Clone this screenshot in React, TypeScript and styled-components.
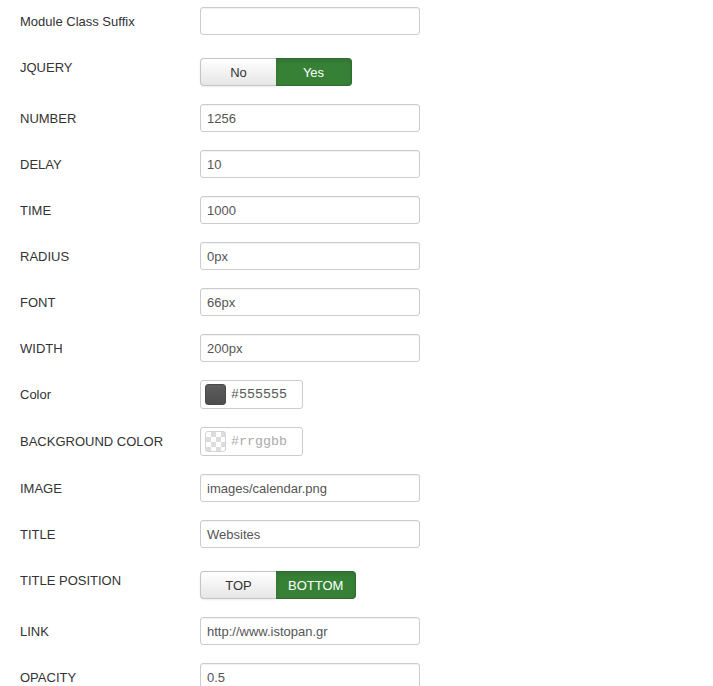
import React from "react";
import styled, { createGlobalStyle } from "styled-components";

const Global = createGlobalStyle`
  html, body { margin: 0; padding: 0; background: #fff; }
  body { font-family: "Liberation Sans", Arial, sans-serif; font-size: 13px; color: #333; }
`;

const Form = styled.div`
  padding: 7px 0 0 20px;
  display: flex;
  flex-direction: column;
  gap: 18px;
`;

const Row = styled.div`
  display: flex;
  align-items: flex-start;
`;

const Label = styled.label`
  width: 180px;
  padding-top: 6px;
  line-height: 18px;
  font-size: 13px;
  color: #333;
`;

const Controls = styled.div<{ $offset?: boolean }>`
  padding-top: ${(p) => (p.$offset ? "5px" : "0")};
  display: flex;
`;

const TextInput = styled.div`
  box-sizing: border-box;
  width: 220px;
  height: 28px;
  border: 1px solid #ccc;
  border-radius: 3px;
  padding: 0 6px;
  display: flex;
  align-items: center;
  font-size: 13px;
  color: #555;
  box-shadow: inset 0 1px 1px rgba(0, 0, 0, 0.06);
`;

const BtnGroup = styled.div`
  display: flex;
`;

const ToggleBtn = styled.div<{ $active?: boolean; $first?: boolean }>`
  box-sizing: border-box;
  min-width: 76px;
  height: 28px;
  padding: 0 12px;
  display: flex;
  align-items: center;
  justify-content: center;
  font-size: 13px;
  border: 1px solid ${(p) => (p.$active ? "#2e6b2e" : "#c4c4c4")};
  border-radius: ${(p) => (p.$first ? "4px 0 0 4px" : "0 4px 4px 0")};
  ${(p) => (p.$first ? "border-right: none;" : "border-left: none;")}
  color: ${(p) => (p.$active ? "#fff" : "#333")};
  background: ${(p) =>
    p.$active ? "#378137" : "linear-gradient(#ffffff, #e6e6e6)"};
  box-shadow: ${(p) =>
    p.$active
      ? "inset 0 2px 4px rgba(0,0,0,0.12)"
      : "0 1px 2px rgba(0,0,0,0.08)"};
`;

const ColorBox = styled.div`
  box-sizing: border-box;
  width: 103px;
  height: 29px;
  border: 1px solid #ccc;
  border-radius: 3px;
  padding: 0 4px;
  display: flex;
  align-items: center;
  gap: 5px;
`;

const Swatch = styled.div<{ $empty?: boolean }>`
  width: 21px;
  height: 21px;
  border-radius: 3px;
  box-sizing: border-box;
  ${(p) =>
    p.$empty
      ? `
    border: 1px solid #d4d4d4;
    background-color: #fff;
    background-image:
      linear-gradient(45deg, #ddd 25%, transparent 25%, transparent 75%, #ddd 75%),
      linear-gradient(45deg, #ddd 25%, transparent 25%, transparent 75%, #ddd 75%);
    background-size: 10px 10px;
    background-position: 0 0, 5px 5px;
  `
      : `
    border: 1px solid #4a4a4a;
    background: linear-gradient(#5e5e5e, #555555 50%, #4c4c4c);
  `}
`;

const ColorText = styled.span<{ $placeholder?: boolean }>`
  font-family: "Liberation Mono", "DejaVu Sans Mono", monospace;
  font-size: 13.3px;
  color: ${(p) => (p.$placeholder ? "#aaa" : "#555")};
`;

type Field =
  | { kind: "text"; label: string; value: string }
  | { kind: "toggle"; label: string; options: string[]; active: number }
  | { kind: "color"; label: string; value: string; empty?: boolean };

const fields: Field[] = [
  { kind: "text", label: "Module Class Suffix", value: "" },
  { kind: "toggle", label: "JQUERY", options: ["No", "Yes"], active: 1 },
  { kind: "text", label: "NUMBER", value: "1256" },
  { kind: "text", label: "DELAY", value: "10" },
  { kind: "text", label: "TIME", value: "1000" },
  { kind: "text", label: "RADIUS", value: "0px" },
  { kind: "text", label: "FONT", value: "66px" },
  { kind: "text", label: "WIDTH", value: "200px" },
  { kind: "color", label: "Color", value: "#555555" },
  { kind: "color", label: "BACKGROUND COLOR", value: "#rrggbb", empty: true },
  { kind: "text", label: "IMAGE", value: "images/calendar.png" },
  { kind: "text", label: "TITLE", value: "Websites" },
  { kind: "toggle", label: "TITLE POSITION", options: ["TOP", "BOTTOM"], active: 1 },
  { kind: "text", label: "LINK", value: "http://www.istopan.gr" },
  { kind: "text", label: "OPACITY", value: "0.5" },
];

export default function App() {
  return (
    <>
      <Global />
      <Form>
        {fields.map((f) => (
          <Row key={f.label}>
            <Label>{f.label}</Label>
            {f.kind === "text" && (
              <Controls>
                <TextInput>{f.value}</TextInput>
              </Controls>
            )}
            {f.kind === "toggle" && (
              <Controls $offset>
                <BtnGroup>
                  {f.options.map((o, i) => (
                    <ToggleBtn key={o} $first={i === 0} $active={i === f.active}>
                      {o}
                    </ToggleBtn>
                  ))}
                </BtnGroup>
              </Controls>
            )}
            {f.kind === "color" && (
              <Controls>
                <ColorBox>
                  <Swatch $empty={f.empty} />
                  <ColorText $placeholder={f.empty}>{f.value}</ColorText>
                </ColorBox>
              </Controls>
            )}
          </Row>
        ))}
      </Form>
    </>
  );
}
